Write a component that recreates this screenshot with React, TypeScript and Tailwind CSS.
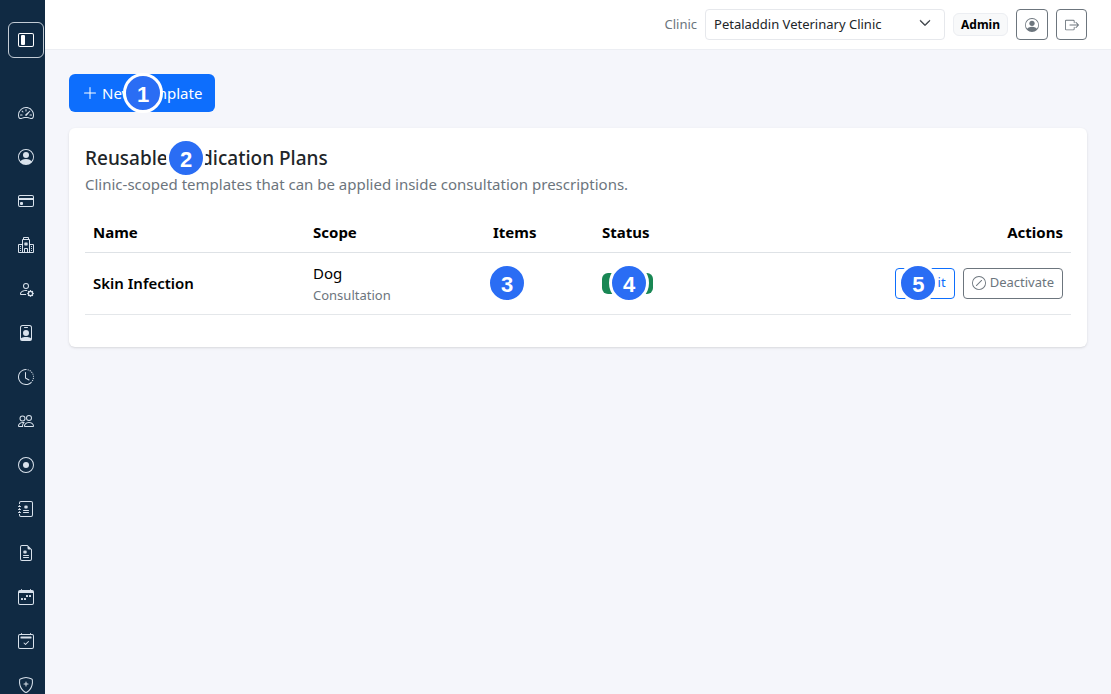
import type { ReactNode } from "react";
import type { IconType } from "react-icons";
import {
  BsBoxArrowRight,
  BsCalendar2Check,
  BsCalendarWeek,
  BsChevronDown,
  BsClockHistory,
  BsCreditCard,
  BsFileEarmarkMedical,
  BsHospital,
  BsJournalMedical,
  BsLayoutSidebarInset,
  BsPencil,
  BsPeople,
  BsPersonBadge,
  BsPersonCircle,
  BsPersonGear,
  BsPlusLg,
  BsRecordCircle,
  BsShieldPlus,
  BsSlashCircle,
  BsSpeedometer2,
} from "react-icons/bs";

const navItems: { label: string; icon: IconType }[] = [
  { label: "Dashboard", icon: BsSpeedometer2 },
  { label: "Profile", icon: BsPersonCircle },
  { label: "Billing", icon: BsCreditCard },
  { label: "Clinics", icon: BsHospital },
  { label: "User settings", icon: BsPersonGear },
  { label: "Staff", icon: BsPersonBadge },
  { label: "History", icon: BsClockHistory },
  { label: "Clients", icon: BsPeople },
  { label: "Records", icon: BsRecordCircle },
  { label: "Journal", icon: BsJournalMedical },
  { label: "Prescriptions", icon: BsFileEarmarkMedical },
  { label: "Schedule", icon: BsCalendarWeek },
  { label: "Appointments", icon: BsCalendar2Check },
  { label: "Vaccinations", icon: BsShieldPlus },
];

function Marker({ className, children }: { className: string; children: ReactNode }) {
  return (
    <span
      className={`absolute z-10 flex size-10 items-center justify-center rounded-full border-3 border-white bg-[#2a6df4] pt-1 font-['Liberation_Sans',sans-serif] text-[22px] leading-none font-bold text-white ${className}`}
    >
      {children}
    </span>
  );
}

function Sidebar() {
  return (
    <aside className="w-[45px] shrink-0 overflow-hidden bg-[#102a43] pt-[22px] pl-2">
      <button
        type="button"
        aria-label="Toggle sidebar"
        className="flex size-9 items-center justify-center rounded-md border border-[#c3ccd5] text-white"
      >
        <BsLayoutSidebarInset className="size-4" />
      </button>
      <nav className="mt-[33px]">
        {navItems.map(({ label, icon: Icon }) => (
          <a
            key={label}
            href="#"
            aria-label={label}
            className="flex h-11 w-9 items-center justify-center text-[#d9e2ec]"
          >
            <Icon className="size-4" />
          </a>
        ))}
      </nav>
    </aside>
  );
}

function Topbar() {
  return (
    <header className="flex h-[50px] items-center justify-end gap-2 border-b border-[#eceef3] bg-white pr-6 text-[13px]">
      <label htmlFor="clinic" className="text-[13px] text-[#6c757d]">
        Clinic
      </label>
      <div className="relative">
        <select
          id="clinic"
          className="h-[31px] w-60 appearance-none rounded border border-[#e6e8ec] bg-white pr-9 pl-2 text-[13px] text-[#212529]"
        >
          <option>Petaladdin Veterinary Clinic</option>
        </select>
        <BsChevronDown className="pointer-events-none absolute top-2 right-3.5 size-3 text-[#343a40]" strokeWidth={1} />
      </div>
      <span className="flex h-[23px] items-center rounded-md border border-[#eceef2] bg-[#f8f9fa] px-[7px] text-[12px] font-bold text-black">
        Admin
      </span>
      <button
        type="button"
        aria-label="Account"
        className="flex h-[31px] w-8 items-center justify-center rounded border border-[#6c757d] text-[#6c757d]"
      >
        <BsPersonCircle className="size-3.5" />
      </button>
      <button
        type="button"
        aria-label="Sign out"
        className="flex h-[31px] w-[31px] items-center justify-center rounded border border-[#6c757d] text-[#6c757d]"
      >
        <BsBoxArrowRight className="size-3.5" />
      </button>
    </header>
  );
}

function PlansTable() {
  return (
    <table className="mt-4 w-full table-fixed border-collapse text-left text-[15px] text-black">
      <colgroup>
        <col className="w-[220px]" />
        <col className="w-[180px]" />
        <col className="w-[109px]" />
        <col className="w-[109px]" />
        <col />
      </colgroup>
      <thead>
        <tr className="h-10 border-b border-[#dee2e6] font-bold">
          <th className="px-2">Name</th>
          <th className="px-2">Scope</th>
          <th className="px-2">Items</th>
          <th className="px-2">Status</th>
          <th className="px-2 text-right">Actions</th>
        </tr>
      </thead>
      <tbody>
        <tr className="h-[62px] border-b border-[#e4e7ea]">
          <td className="px-2 font-semibold">Skin Infection</td>
          <td className="px-2">
            <div className="leading-6">Dog</div>
            <div className="text-[13px] leading-5 text-[#6c757d]">Consultation</div>
          </td>
          <td className="px-2">
            <div className="relative w-7">
              1
              <Marker className="top-1/2 left-1/2 -translate-1/2">3</Marker>
            </div>
          </td>
          <td className="px-2">
            <span className="relative flex h-[21px] w-[51px] items-center justify-center rounded-md bg-[#198754] text-[11px] font-bold text-white">
              Active
              <Marker className="top-1/2 left-[27px] -translate-1/2">4</Marker>
            </span>
          </td>
          <td className="px-2">
            <div className="flex justify-end gap-2 text-[13px]">
              <button
                type="button"
                className="relative flex h-[31px] items-center gap-1 rounded border border-[#0d6efd] px-2 text-[#0d6efd]"
              >
                <BsPencil className="size-3.5" />
                Edit
                <Marker className="top-1/2 left-[22px] -translate-1/2">5</Marker>
              </button>
              <button
                type="button"
                className="flex h-[31px] items-center gap-1 rounded border border-[#6c757d] px-2 text-[#6c757d]"
              >
                <BsSlashCircle className="size-3.5" />
                Deactivate
              </button>
            </div>
          </td>
        </tr>
      </tbody>
    </table>
  );
}

export default function App() {
  return (
    <div className="flex h-screen overflow-hidden bg-[#f5f6fb] font-['Noto_Sans',sans-serif]">
      <Sidebar />
      <div className="min-w-0 flex-1">
        <Topbar />
        <main className="p-6">
          <button
            type="button"
            className="relative flex h-[38px] items-center gap-1 rounded-md bg-[#0d6efd] px-[13px] text-[15px] text-white"
          >
            <BsPlusLg className="size-4" />
            New Template
            <Marker className="top-1/2 left-[74px] -translate-1/2">1</Marker>
          </button>
          <section className="mt-4 rounded-md bg-white px-4 pt-4 pb-8 shadow-sm">
            <h1 className="relative text-[19px] leading-7 font-medium text-[#212529]">
              Reusable Medication Plans
              <Marker className="top-1/2 left-[101px] -translate-1/2">2</Marker>
            </h1>
            <p className="text-[15px] leading-6 text-[#6c757d]">
              Clinic-scoped templates that can be applied inside consultation prescriptions.
            </p>
            <PlansTable />
          </section>
        </main>
      </div>
    </div>
  );
}
